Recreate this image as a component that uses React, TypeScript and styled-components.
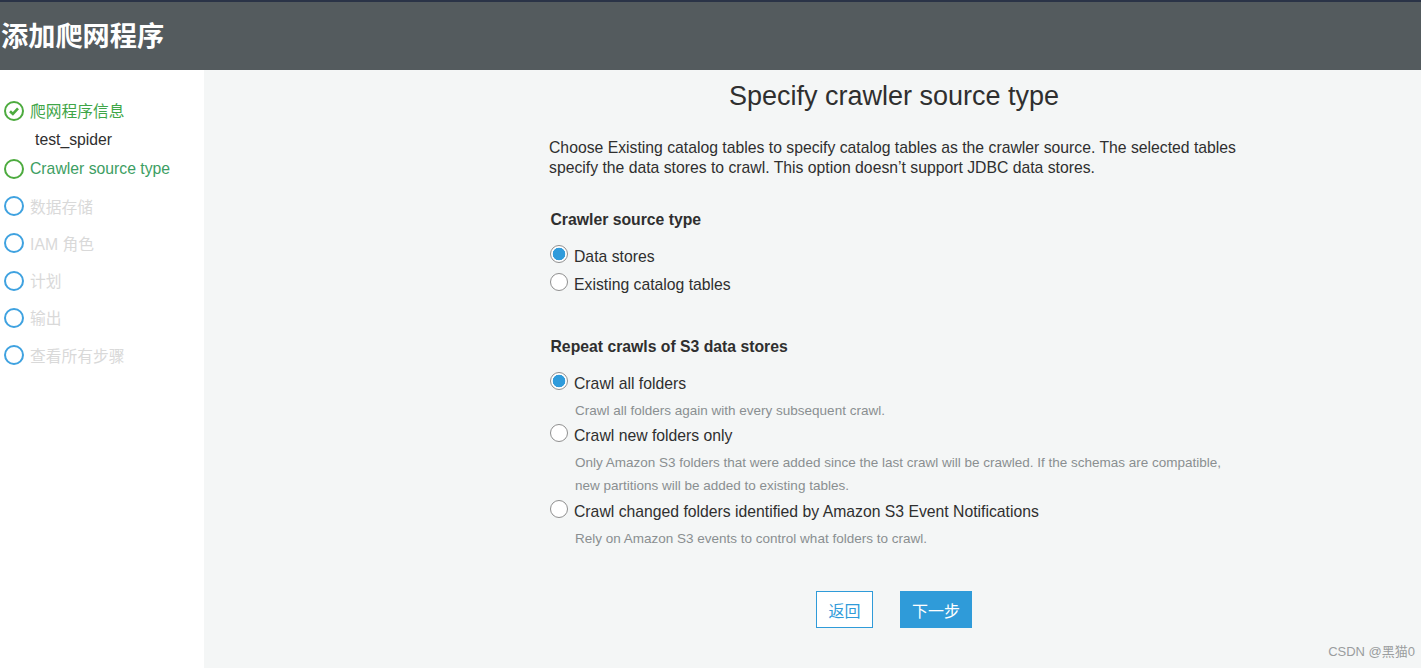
import React from 'react';
import styled, { createGlobalStyle } from 'styled-components';

const Global = createGlobalStyle`
  html, body {
    margin: 0;
    padding: 0;
    height: 100%;
    overflow: hidden;
    background: #f4f6f6;
    font-family: "Liberation Sans", "Noto Sans CJK SC", sans-serif;
  }
  #root { height: 100%; }
`;

const Page = styled.div`
  position: relative;
  height: 668px;
  display: flex;
  flex-direction: column;
`;

const Header = styled.header`
  height: 64px;
  flex: none;
  border-top: 2px solid #2a3347;
  background: #545b5e;
  display: flex;
  align-items: center;
  padding: 0 0 4px 1px;
  h1 {
    margin: 0;
    font-size: 27.2px;
    font-weight: 700;
    color: #fff;
  }
`;

const Body = styled.div`
  flex: 1;
  display: flex;
  min-height: 0;
`;

const Side = styled.nav`
  width: 204px;
  flex: none;
  background: #fff;
  padding: 22px 0 0 4px;
  box-sizing: border-box;
`;

const Step = styled.div<{ $state: 'done' | 'active' | 'todo' }>`
  height: 37.25px;
  display: flex;
  align-items: center;
  gap: 6px;
  font-size: 15.75px;
  color: ${(p) => (p.$state === 'todo' ? '#d9d9d9' : p.$state === 'active' ? '#3d9e63' : '#3fa648')};
`;

const Ring = styled.span<{ $green?: boolean }>`
  width: 20px;
  height: 20px;
  flex: none;
  box-sizing: border-box;
  border-radius: 50%;
  border: 2px solid ${(p) => (p.$green ? '#4dab3f' : '#3fa2e0')};
  display: flex;
  align-items: center;
  justify-content: center;
`;

const SubStep = styled.div`
  font-size: 15.75px;
  color: #2f2f2f;
  padding-left: 31px;
  height: 19px;
  line-height: 19px;
  margin: 1px 0;
`;

const Main = styled.main`
  flex: 1;
  padding: 10px 0 0 345px;
  box-sizing: border-box;
`;

const Column = styled.div`
  width: 690px;
  color: #2f2f2f;
`;

const Title = styled.h2`
  margin: 0;
  text-align: center;
  font-size: 27px;
  font-weight: 400;
  line-height: 32px;
`;

const Intro = styled.p`
  margin: 26px 0 0;
  font-size: 15.75px;
  line-height: 20px;
`;

const GroupLabel = styled.div<{ $gap: number }>`
  margin: ${(p) => p.$gap}px 0 0 1.5px;
  font-size: 15.75px;
  font-weight: 700;
  line-height: 20px;
`;

const Options = styled.div`
  margin-top: 13px;
`;

const Option = styled.label`
  display: flex;
  align-items: center;
  gap: 6px;
  height: 28px;
  margin-left: 1px;
  font-size: 15.75px;
`;

const Radio = styled.span<{ $on?: boolean }>`
  width: 18px;
  height: 18px;
  flex: none;
  box-sizing: border-box;
  border-radius: 50%;
  margin-top: -6px;
  border: 1px solid #8f8f8f;
  background: ${(p) => (p.$on ? 'radial-gradient(circle, #2f9bdb 0 6px, #fff 6.6px)' : '#fff')};
`;

const Hint = styled.div<{ $tall?: boolean }>`
  margin: 1px 0 0 26px;
  padding-bottom: ${(p) => (p.$tall ? '1px' : '0')};
  font-size: 13.5px;
  line-height: 23px;
  color: #8a8f91;
`;

const Actions = styled.div`
  margin-top: 41px;
  display: flex;
  justify-content: center;
  gap: 27px;
`;

const Button = styled.button<{ $primary?: boolean }>`
  height: 37px;
  padding: 0;
  width: ${(p) => (p.$primary ? '72px' : '57px')};
  font: 16px "Liberation Sans", "Noto Sans CJK SC", sans-serif;
  border: 1px solid #2f9bd9;
  color: ${(p) => (p.$primary ? '#fff' : '#2f9bd9')};
  background: ${(p) => (p.$primary ? '#2f9bd9' : '#fff')};
`;

const Watermark = styled.div`
  position: absolute;
  right: 6px;
  bottom: 8px;
  font-size: 13px;
  color: #9a9d9e;
`;

const steps = ['数据存储', 'IAM 角色', '计划', '输出', '查看所有步骤'];

export default function App() {
  return (
    <Page>
      <Global />
      <Header>
        <h1>添加爬网程序</h1>
      </Header>
      <Body>
        <Side>
          <Step $state="done">
            <Ring $green>
              <svg width="12" height="12" viewBox="0 0 12 12">
                <path d="M2 6.2 4.9 9 10 3.4" fill="none" stroke="#4dab3f" strokeWidth="2.6" />
              </svg>
            </Ring>
            爬网程序信息
          </Step>
          <SubStep>test_spider</SubStep>
          <Step $state="active">
            <Ring $green />
            Crawler source type
          </Step>
          {steps.map((s) => (
            <Step $state="todo" key={s}>
              <Ring />
              {s}
            </Step>
          ))}
        </Side>
        <Main>
          <Column>
            <Title>Specify crawler source type</Title>
            <Intro>
              Choose Existing catalog tables to specify catalog tables as the crawler source. The selected tables
              specify the data stores to crawl. This option doesn’t support JDBC data stores.
            </Intro>
            <GroupLabel $gap={32}>Crawler source type</GroupLabel>
            <Options>
              <Option><Radio $on />Data stores</Option>
              <Option><Radio />Existing catalog tables</Option>
            </Options>
            <GroupLabel $gap={38}>Repeat crawls of S3 data stores</GroupLabel>
            <Options>
              <Option><Radio $on />Crawl all folders</Option>
              <Hint>Crawl all folders again with every subsequent crawl.</Hint>
              <Option><Radio />Crawl new folders only</Option>
              <Hint $tall>
                Only Amazon S3 folders that were added since the last crawl will be crawled. If the schemas are compatible,
                <br />
                new partitions will be added to existing tables.
              </Hint>
              <Option><Radio />Crawl changed folders identified by Amazon S3 Event Notifications</Option>
              <Hint>Rely on Amazon S3 events to control what folders to crawl.</Hint>
            </Options>
            <Actions>
              <Button>返回</Button>
              <Button $primary>下一步</Button>
            </Actions>
          </Column>
        </Main>
      </Body>
      <Watermark>CSDN @黑猫0</Watermark>
    </Page>
  );
}
